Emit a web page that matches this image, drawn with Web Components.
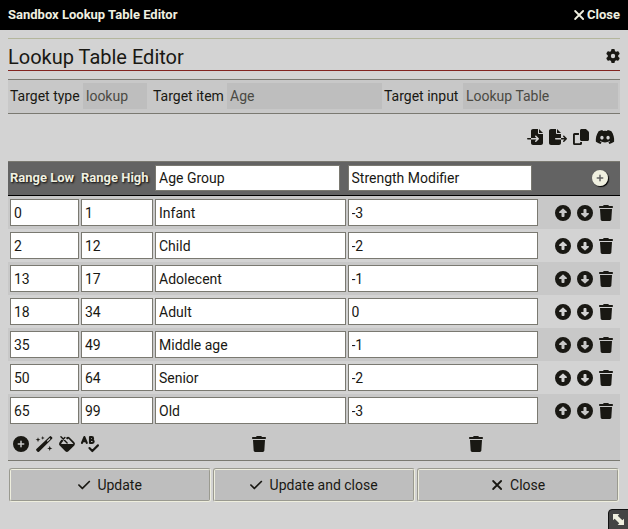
<!DOCTYPE html>
<html lang="en">
<head>
<meta charset="utf-8">
<title>Sandbox Lookup Table Editor</title>
<style>
html, body { height: 100%; }
body { margin: 0; background: #d3d3d3; color: #191813; font: 14px/20px Roboto, "Liberation Sans", sans-serif; }
</style>
</head>
<body>
<lookup-window></lookup-window>
<script>
const ICONS = {
  close: [448, '<path fill="none" stroke="currentColor" stroke-width="66" stroke-linecap="round" d="M78 110 370 402M370 110 78 402"/>'],
  gear: [512, '<path fill-rule="evenodd" d="M495.9 166.6c3.2 8.7 .5 18.4-6.4 24.6l-43.3 39.4c1.1 8.3 1.7 16.8 1.7 25.4s-.6 17.1-1.7 25.4l43.3 39.4c6.9 6.2 9.6 15.9 6.4 24.6c-4.4 11.9-9.7 23.3-15.8 34.3l-4.7 8.1c-6.6 11-14 21.4-22.1 31.2c-5.9 7.2-15.7 9.6-24.5 6.8l-55.7-17.7c-13.4 10.3-28.2 18.9-44 25.4l-12.5 57.1c-2 9.1-9 16.3-18.2 17.8c-13.8 2.3-28 3.5-42.5 3.5s-28.7-1.2-42.5-3.5c-9.2-1.5-16.2-8.7-18.2-17.8l-12.5-57.1c-15.8-6.5-30.6-15.1-44-25.4L83.1 425.9c-8.8 2.8-18.6 .3-24.5-6.8c-8.1-9.8-15.5-20.2-22.1-31.2l-4.7-8.1c-6.1-11-11.4-22.4-15.8-34.3c-3.2-8.7-.5-18.4 6.4-24.6l43.3-39.4C64.6 273.1 64 264.6 64 256s.6-17.1 1.7-25.4L22.4 191.2c-6.9-6.2-9.6-15.9-6.4-24.6c4.4-11.9 9.7-23.3 15.8-34.3l4.7-8.1c6.6-11 14-21.4 22.1-31.2c5.9-7.2 15.7-9.6 24.5-6.8l55.7 17.7c13.4-10.3 28.2-18.9 44-25.4l12.5-57.1c2-9.1 9-16.3 18.2-17.8C227.3 1.2 241.5 0 256 0s28.7 1.2 42.5 3.5c9.2 1.5 16.2 8.7 18.2 17.8l12.5 57.1c15.8 6.5 30.6 15.1 44 25.4l55.7-17.7c8.8-2.8 18.6-.3 24.5 6.8c8.1 9.8 15.5 20.2 22.1 31.2l4.7 8.1c6.1 11 11.4 22.4 15.8 34.3zM256 336a80 80 0 1 0 0-160 80 80 0 1 0 0 160z"/>'],
  import: [512, '<path d="M128 64c0-35.3 28.7-64 64-64H352V128c0 17.7 14.3 32 32 32H512V448c0 35.3-28.7 64-64 64H192c-35.3 0-64-28.7-64-64V336H302.1l-39 39c-9.4 9.4-9.4 24.6 0 33.9s24.6 9.4 33.9 0l80-80c9.4-9.4 9.4-24.6 0-33.9l-80-80c-9.4-9.4-24.6-9.4-33.9 0s-9.4 24.6 0 33.9l39 39H128V64zm0 224v48H24c-13.3 0-24-10.7-24-24s10.7-24 24-24H128zM512 128H384V0L512 128z"/>'],
  export: [576, '<path d="M0 64C0 28.7 28.7 0 64 0H224V128c0 17.7 14.3 32 32 32H384V288H216c-13.3 0-24 10.7-24 24s10.7 24 24 24H384V448c0 35.3-28.7 64-64 64H64c-35.3 0-64-28.7-64-64V64zM384 336V288H494.1l-39-39c-9.4-9.4-9.4-24.6 0-33.9s24.6-9.4 33.9 0l80 80c9.4 9.4 9.4 24.6 0 33.9l-80 80c-9.4 9.4-24.6 9.4-33.9 0s-9.4-24.6 0-33.9l39-39H384zm0-208H256V0L384 128z"/>'],
  copy: [512, '<path d="M272 0H396c13 0 25 5 34 14l68 68c9 9 14 21 14 34V336c0 26-21 48-48 48H272c-26 0-48-22-48-48V48c0-27 22-48 48-48z"/><path fill="none" stroke="currentColor" stroke-width="60" d="M190 158H48q-18 0-18 18V464q0 18 18 18H240q18 0 18-18V416"/>'],
  discord: [640, '<path fill-rule="evenodd" d="M524.531,69.836a1.5,1.5,0,0,0-.764-.7A485.065,485.065,0,0,0,404.081,32.03a1.816,1.816,0,0,0-1.923.91,337.461,337.461,0,0,0-14.9,30.6,447.848,447.848,0,0,0-134.426,0,309.541,309.541,0,0,0-15.135-30.6,1.89,1.89,0,0,0-1.924-.91A483.689,483.689,0,0,0,116.085,69.137a1.712,1.712,0,0,0-.788.676C39.068,183.651,18.186,294.69,28.43,404.354a2.016,2.016,0,0,0,.765,1.375A487.666,487.666,0,0,0,176.02,479.918a1.9,1.9,0,0,0,2.063-.676A348.2,348.2,0,0,0,208.12,430.4a1.86,1.86,0,0,0-1.019-2.588,321.173,321.173,0,0,1-45.868-21.853,1.885,1.885,0,0,1-.185-3.126c3.082-2.309,6.166-4.711,9.109-7.137a1.819,1.819,0,0,1,1.9-.256c96.229,43.917,200.41,43.917,295.5,0a1.812,1.812,0,0,1,1.924.233c2.944,2.426,6.027,4.851,9.132,7.16a1.884,1.884,0,0,1-.162,3.126,301.407,301.407,0,0,1-45.89,21.83,1.875,1.875,0,0,0-1,2.611,391.055,391.055,0,0,0,30.014,48.815,1.864,1.864,0,0,0,2.063.7A486.048,486.048,0,0,0,610.7,405.729a1.882,1.882,0,0,0,.765-1.352C623.729,277.594,590.933,167.465,524.531,69.836ZM222.491,337.58c-28.972,0-52.844-26.587-52.844-59.239S193.056,219.1,222.491,219.1c29.665,0,53.306,26.82,52.843,59.239C275.334,310.993,251.924,337.58,222.491,337.58Zm195.38,0c-28.971,0-52.843-26.587-52.843-59.239S388.437,219.1,417.871,219.1c29.667,0,53.307,26.82,52.844,59.239C470.715,310.993,447.538,337.58,417.871,337.58Z"/>'],
  plus: [512, '<path d="M256 512A256 256 0 1 0 256 0a256 256 0 1 0 0 512zM232 344V280H168c-13.3 0-24-10.7-24-24s10.7-24 24-24h64V168c0-13.3 10.7-24 24-24s24 10.7 24 24v64h64c13.3 0 24 10.7 24 24s-10.7 24-24 24H280v64c0 13.3-10.7 24-24 24s-24-10.7-24-24z"/>'],
  up: [512, '<path d="M256 0a256 256 0 1 0 0 512A256 256 0 1 0 256 0zM135.1 217.4l107.1-99.9c3.8-3.5 8.7-5.5 13.8-5.5s10.1 2 13.8 5.5l107.1 99.9c4.5 4.2 7.1 10.1 7.1 16.3c0 12.3-10 22.3-22.3 22.3H304v96c0 17.7-14.3 32-32 32H240c-17.7 0-32-14.3-32-32V256H150.3C138 256 128 246 128 233.7c0-6.2 2.6-12.1 7.1-16.3z"/>'],
  trash: [448, '<path d="M135.2 17.7L128 32H32C14.3 32 0 46.3 0 64S14.3 96 32 96H416c17.7 0 32-14.3 32-32s-14.3-32-32-32H320l-7.2-14.3C307.4 6.8 296.3 0 284.2 0H163.8c-12.1 0-23.2 6.8-28.6 17.7zM416 128H32L53.2 467c1.6 25.3 22.6 45 47.9 45H346.9c25.3 0 46.3-19.7 47.9-45L416 128z"/>'],
  wand: [576, '<path fill-rule="evenodd" d="M470 12q25-20 48 2l28 28q22 23 2 48L128 500q-24 22-48 0l-36-36q-22-24 0-48zM376 156l28 28 92-92-28-28z"/><path d="m248 0 16 44 44 16-44 16-16 44-16-44-44-16 44-16zM96 40l20 58 58 20-58 20-20 58-20-58-58-20 58-20zM472 312l22 62 62 22-62 22-22 62-22-62-62-22 62-22z"/>'],
  fill: [512, '<path fill-rule="evenodd" d="M92 112 60 144q-56 60-60 112 0 28 22 50l180 182q50 46 100 0l188-188q44-52 0-100L338 46q-50-44-98 0l-20 20 44 44 26-20q8-6 16 0l144 146q8 9 8 20H68q10-40 38-66l30-30z"/><path fill="none" stroke="currentColor" stroke-width="46" stroke-linecap="round" d="M62 24 260 222M188 48 82 154"/>'],
  spell: [576, '<path fill="none" stroke="currentColor" stroke-width="68" stroke-linecap="round" stroke-linejoin="round" d="M32 222 108 34 184 222M66 166H150M288 34V222H360C420 222 420 132 360 128H288M288 34H346C400 34 400 124 346 128M270 386 362 480 542 300"/>'],
  check: [448, '<path d="M438.6 105.4c12.5 12.5 12.5 32.8 0 45.3l-256 256c-12.5 12.5-32.8 12.5-45.3 0l-128-128c-12.5-12.5-12.5-32.8 0-45.3s32.8-12.5 45.3 0L160 338.7 393.4 105.4c12.5-12.5 32.8-12.5 45.3 0z"/>'],
  resize: [512, '<path d="M40 40H290L226 104 408 286 472 222V472H222L286 408 104 226 40 290z"/>']
};
ICONS.down = [512, `<g transform="rotate(180 256 256)">${ICONS.up[1]}</g>`];

function define(name, render) {
  customElements.define(name, class extends HTMLElement {
    connectedCallback() {
      if (this.shadowRoot) return;
      this.attachShadow({ mode: 'open' }).innerHTML = render(this);
    }
  });
}

define('fa-icon', el => {
  const [w, body] = ICONS[el.getAttribute('name')];
  return `<style>
    :host { display: inline-flex; }
    svg { display: block; height: var(--icon-size, 16px); fill: currentColor; overflow: visible; }
  </style><svg viewBox="0 0 ${w} 512" aria-hidden="true">${body}</svg>`;
});

define('icon-button', el => `<style>
    :host { display: inline-flex; }
    button { display: flex; margin: 0; padding: 0; border: 0; background: none; color: inherit; cursor: pointer; }
  </style><button type="button" aria-label="${el.getAttribute('label')}"><fa-icon name="${el.getAttribute('name')}"></fa-icon></button>`);

define('window-header', () => `<style>
    :host { display: flex; justify-content: space-between; align-items: center; height: 30px; padding: 0 8px;
      background: #000; color: #f0f0e0; font-size: 13px; font-weight: 700; --icon-size: 14px; }
    h4 { margin: 0; font-size: 13px; }
    a { display: flex; align-items: center; gap: 2px; color: inherit; text-decoration: none; }
  </style><h4><slot></slot></h4><a href="#"><fa-icon name="close"></fa-icon>Close</a>`);

define('editor-title', () => `<style>
    :host { display: flex; justify-content: space-between; align-items: center; height: 31px;
      border-top: 1px solid #b4b69c; border-bottom: 1px solid #822420; --icon-size: 14px; }
    h1 { margin: 4px 0 0; font-size: 20px; line-height: 26px; font-weight: 400; }
    icon-button { margin-top: 2px; }
  </style><h1><slot></slot></h1><icon-button name="gear" label="Settings"></icon-button>`);

define('target-bar', () => `<style>
    :host { display: grid; grid-template-columns: 75px 64px 80px 1fr 81px 1fr; align-items: center;
      margin-top: 8px; padding: 3px 2px 4px 0; border: solid #7a7971; border-width: 1px 0; background: #c8c8c8; }
    label { padding-left: 2px; white-space: nowrap; }
    label.second { padding-left: 6px; }
    input { box-sizing: border-box; width: 100%; height: 26px; margin: 0; padding: 0 3px; border: 0;
      background: #bebebe; color: #4b4a44; font: inherit; }
  </style>
  <label for="type">Target type</label><input id="type" value="lookup" disabled>
  <label class="second" for="item">Target item</label><input id="item" value="Age" disabled>
  <label for="target">Target input</label><input id="target" value="Lookup Table" disabled>`);

define('tool-bar', () => `<style>
    :host { display: flex; justify-content: flex-end; align-items: center; gap: 6px; padding: 15px 5px 16px; }
  </style>
  <icon-button name="import" label="Import"></icon-button><icon-button name="export" label="Export"></icon-button>
  <icon-button name="copy" label="Copy"></icon-button><icon-button name="discord" label="Discord"></icon-button>`);

const ROWS = [
  ['0', '1', 'Infant', '-3'], ['2', '12', 'Child', '-2'], ['13', '17', 'Adolecent', '-1'], ['18', '34', 'Adult', '0'],
  ['35', '49', 'Middle age', '-1'], ['50', '64', 'Senior', '-2'], ['65', '99', 'Old', '-3']
];
const FIELDS = ['Range Low', 'Range High', 'Age Group', 'Strength Modifier'];

define('lookup-table', () => `<style>
    :host { display: block; border-top: 1px solid #7a7971; border-bottom: 1px solid #7a7971; }
    table { width: 100%; table-layout: fixed; border-collapse: separate; border-spacing: 0; }
    th, td { padding: 3px 1px; text-align: left; vertical-align: middle; }
    th:first-child, td:first-child { padding-left: 2px; }
    th { padding-bottom: 4px; border-bottom: 1px solid #000; background: #636363; color: #f0f0e0;
      font-size: 13px; text-shadow: 1px 1px 2px #000; white-space: nowrap; }
    tbody tr:nth-child(odd), .foot { background: #c8c8c8; }
    tbody td { padding: 3px 1px; }
    input { display: block; box-sizing: border-box; width: 100%; height: 27px; margin: 0; padding: 0 3px;
      border: 1px solid #7a7971; border-radius: 0; background: #fff; color: #191813; font: 14px Roboto, "Liberation Sans", sans-serif; }
    th input { width: calc(100% - 6px); height: 26px; }
    .add { display: flex; justify-content: flex-end; padding-right: 11px; }
    .add icon-button { border-radius: 50%; box-shadow: 1px 1px 1px #000; background: #636363; }
    .actions { display: flex; justify-content: flex-end; gap: 6px; padding-right: 6px; }
    .foot { display: grid; grid-template-columns: 142px 1fr 1fr 36px; align-items: center; height: 33px; }
    .tools { display: flex; gap: 6px; padding-left: 5px; }
    .center { justify-self: center; }
  </style>
  <table>
    <colgroup><col style="width:72px"><col style="width:74px"><col><col><col style="width:81px"></colgroup>
    <thead><tr><th>Range Low</th><th>Range High</th><th><input aria-label="Column name" value="Age Group"></th>
      <th><input aria-label="Column name" value="Strength Modifier"></th>
      <th><div class="add"><icon-button name="plus" label="Add column"></icon-button></div></th></tr></thead>
    <tbody>${ROWS.map(r => `<tr>${r.map((v, i) => `<td><input aria-label="${FIELDS[i]}" value="${v}"></td>`).join('')}
      <td><div class="actions"><icon-button name="up" label="Move up"></icon-button><icon-button name="down" label="Move down"></icon-button><icon-button name="trash" label="Delete row"></icon-button></div></td></tr>`).join('')}</tbody>
  </table>
  <div class="foot">
    <div class="tools"><icon-button name="plus" label="Add row"></icon-button><icon-button name="wand" label="Generate"></icon-button>
      <icon-button name="fill" label="Clear"></icon-button><icon-button name="spell" label="Check"></icon-button></div>
    <icon-button class="center" name="trash" label="Delete Age Group"></icon-button>
    <icon-button class="center" name="trash" label="Delete Strength Modifier"></icon-button>
  </div>`);

define('action-button', el => `<style>
    :host { display: block; flex: 1; --icon-size: 14px; }
    button { display: flex; justify-content: center; align-items: center; gap: 7px; box-sizing: border-box; width: 100%;
      height: 34px; margin: 0; padding: 0; border: 2px groove #eeeede; border-radius: 3px;
      background: #bebebe; color: #191813; font: inherit; }
  </style><button type="button"><fa-icon name="${el.getAttribute('icon')}"></fa-icon><span><slot></slot></span></button>`);

define('resize-handle', () => `<style>
    :host { position: absolute; right: -1px; bottom: -1px; display: flex; padding: 3px; border: 1px solid #111;
      border-radius: 4px 0 0 0; background: #444; color: #f0f0e0; --icon-size: 13px; }
  </style><fa-icon name="resize"></fa-icon>`);

define('lookup-window', () => `<style>
    :host { display: block; position: relative; min-height: 100%; overflow: hidden; background: #d3d3d3; }
    main { padding: 8px; }
    footer { display: flex; gap: 2px; padding: 7px 1px 0; }
  </style>
  <window-header>Sandbox Lookup Table Editor</window-header>
  <main>
    <editor-title>Lookup Table Editor</editor-title>
    <target-bar></target-bar>
    <tool-bar></tool-bar>
    <lookup-table></lookup-table>
    <footer>
      <action-button icon="check">Update</action-button>
      <action-button icon="check">Update and close</action-button>
      <action-button icon="close">Close</action-button>
    </footer>
  </main>
  <resize-handle></resize-handle>`);
</script>
</body>
</html>
